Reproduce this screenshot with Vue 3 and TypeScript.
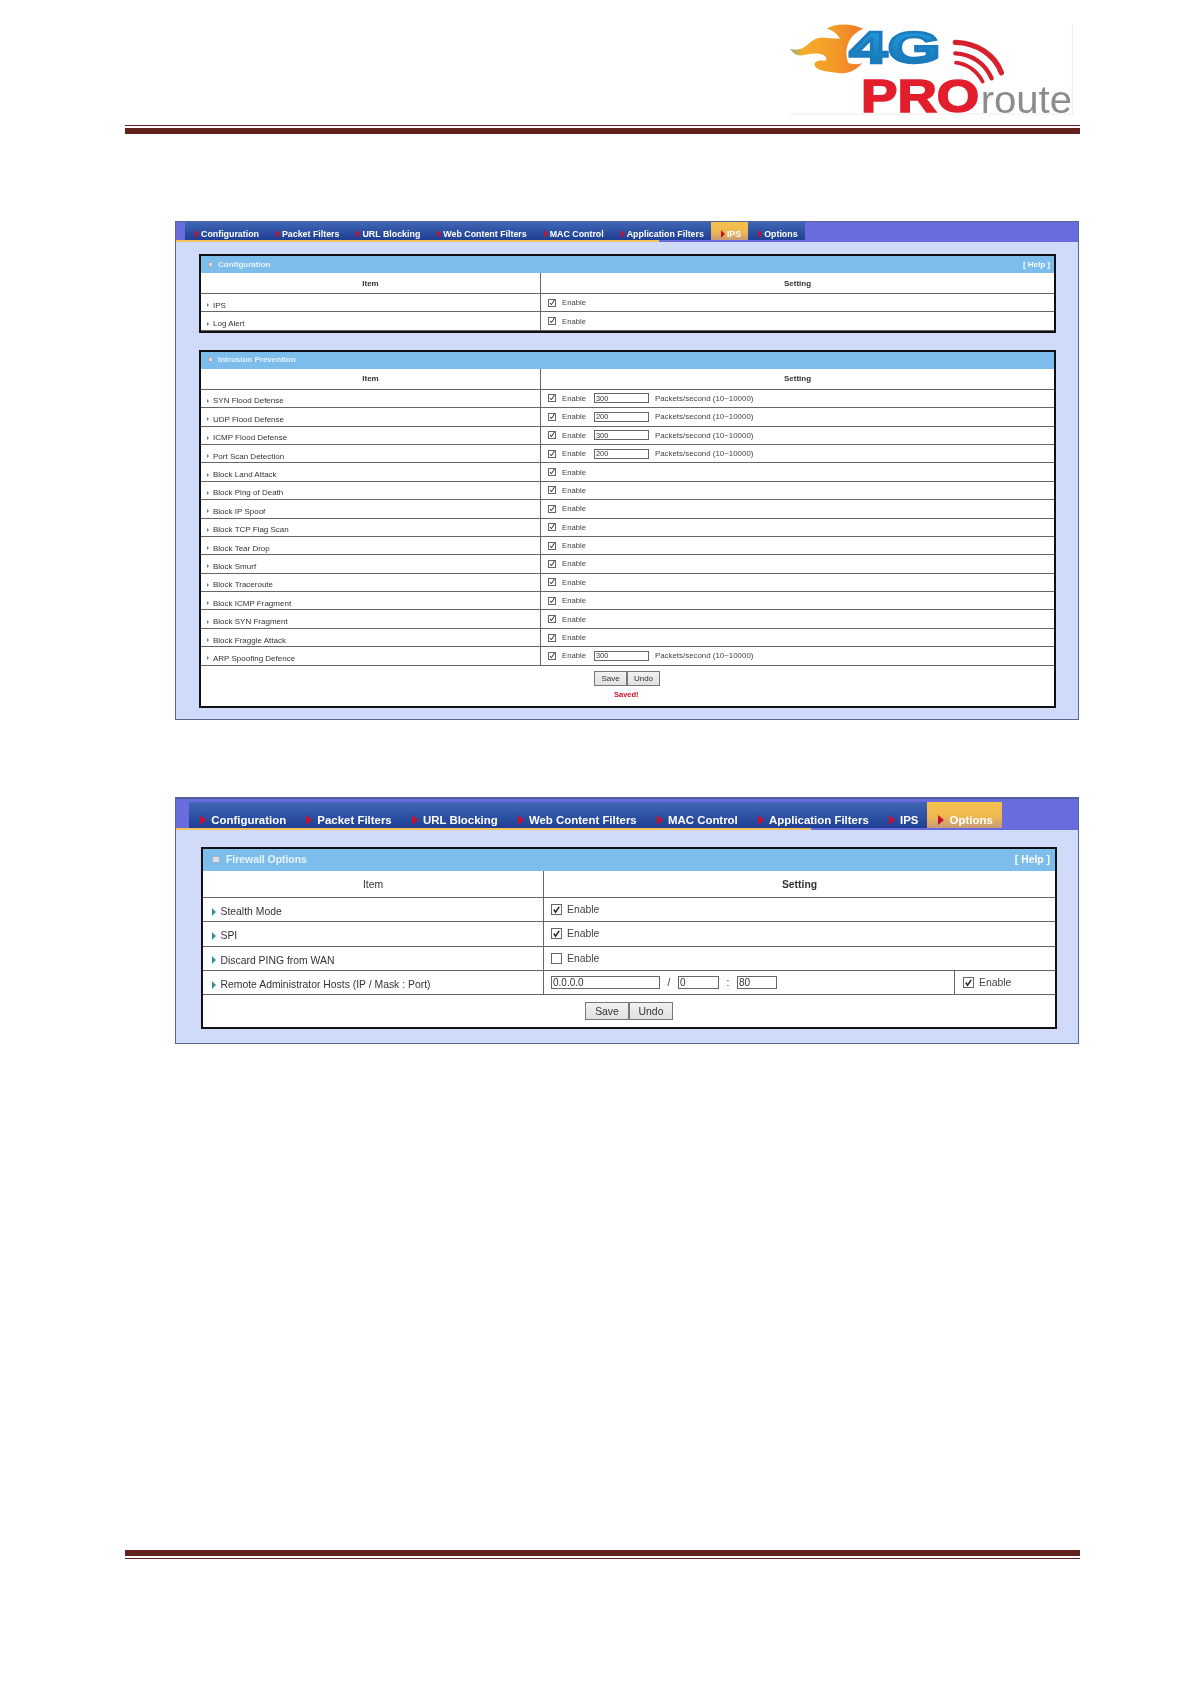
<template>
  <div class="page">
    <div class="head">
      <svg class="logo" viewBox="60 0 900 375" width="300" height="125">
        <defs>
          <linearGradient id="fl" x1="0" y1="0" x2="1" y2="0">
            <stop offset="0" stop-color="#7fb08a" />
            <stop offset="0.16" stop-color="#f3ad2c" />
            <stop offset="0.6" stop-color="#f39a28" />
            <stop offset="1" stop-color="#ee7a26" />
          </linearGradient>
          <linearGradient id="bl" x1="0" y1="0" x2="0" y2="1">
            <stop offset="0" stop-color="#22a0e2" />
            <stop offset="1" stop-color="#1670ac" />
          </linearGradient>
        </defs>
        <path transform="translate(75 54)" d="M15 92C35 100 55 92 70 78C85 62 105 55 125 60L165 62C155 45 140 35 125 32C150 15 200 15 235 32C210 42 195 60 190 75C180 100 185 120 190 135C205 140 220 140 232 135C215 155 190 170 160 165C130 160 95 160 88 140C88 130 100 125 120 128C128 128 125 110 105 108C80 102 55 115 40 112C30 110 20 100 15 92Z" fill="url(#fl)" />
        <text x="268" y="190" class="l4g" textLength="274" lengthAdjust="spacingAndGlyphs">4G</text>
        <text x="303" y="337" class="lpro" textLength="355" lengthAdjust="spacingAndGlyphs">PRO</text>
        <text x="662" y="338" class="lroute" textLength="274" lengthAdjust="spacingAndGlyphs">route</text>
        <g fill="none" stroke="#d6202c" stroke-linecap="round">
          <path d="M586 127C650 128 705 165 724 218" stroke-width="16" />
          <path d="M586 160C635 162 675 190 695 235" stroke-width="13" />
          <path d="M588 188C620 192 650 212 668 245" stroke-width="11" />
        </g>
        <path d="M937 72V342H90" fill="none" stroke="#e2e2e2" stroke-width="2" />
      </svg>
    </div>
    <div class="thin"></div>
    <div class="thick"></div>

    <section class="panel sm first">
      <div class="bar">
        <div class="tabs">
          <div v-for="t in tabs" :key="t" class="tab" :class="{ on: t === 'IPS' }"><i class="arrow"></i>{{ t }}</div>
        </div>
      </div>
      <div class="accent" style="width: 483px"></div>
      <div class="box">
        <div class="title"><span><i class="dot"></i>Configuration</span><b>[ Help ]</b></div>
        <div class="row hd"><div class="c1">Item</div><div class="c2">Setting</div></div>
        <div v-for="r in cfgRows" :key="r" class="row">
          <div class="c1 it"><i class="tri"></i>{{ r }}</div>
          <div class="c2 st"><span class="cb"><svg viewBox="0 0 10 10"><path d="M2 5l2 3 5-8" /></svg></span><span class="en">Enable</span></div>
        </div>
      </div>
      <div class="box second">
        <div class="title"><span><i class="dot"></i>Intrusion Prevention</span></div>
        <div class="row hd"><div class="c1">Item</div><div class="c2">Setting</div></div>
        <div v-for="r in ipsRows" :key="r.name" class="row">
          <div class="c1 it"><i class="tri"></i>{{ r.name }}</div>
          <div class="c2 st">
            <span class="cb"><svg viewBox="0 0 10 10"><path d="M2 5l2 3 5-8" /></svg></span><span class="en">Enable</span>
            <template v-if="r.val"><input class="num" :value="r.val" readonly /><span class="unit">Packets/second (10~10000)</span></template>
          </div>
        </div>
        <div class="acts">
          <div class="btns"><button>Save</button><button>Undo</button></div>
          <div class="saved">Saved!</div>
        </div>
      </div>
    </section>

    <section class="panel lg">
      <div class="bar">
        <div class="tabs">
          <div v-for="t in tabs" :key="t" class="tab" :class="{ on: t === 'Options' }"><i class="arrow"></i>{{ t }}</div>
        </div>
      </div>
      <div class="accent" style="width: 635px"></div>
      <div class="box">
        <div class="title"><span><i class="dot"></i>Firewall Options</span><b>[ Help ]</b></div>
        <div class="row hd"><div class="c1">Item</div><div class="c2">Setting</div></div>
        <div v-for="r in optRows" :key="r.name" class="row">
          <div class="c1 it"><i class="tri"></i>{{ r.name }}</div>
          <div class="c2 st">
            <span class="cb"><svg v-if="r.on" viewBox="0 0 10 10"><path d="M2 5l2 3 4-6" /></svg></span><span class="en">Enable</span>
          </div>
        </div>
        <div class="row">
          <div class="c1 it"><i class="tri"></i>Remote Administrator Hosts (IP / Mask : Port)</div>
          <div class="c2 st hosts">
            <div class="addr">
              <input class="ip" value="0.0.0.0" readonly /><span class="sep">/</span>
              <input class="mask" value="0" readonly /><span class="sep">:</span>
              <input class="port" value="80" readonly />
            </div>
            <div class="c3"><span class="cb"><svg viewBox="0 0 10 10"><path d="M2 5l2 3 4-6" /></svg></span><span class="en">Enable</span></div>
          </div>
        </div>
        <div class="acts">
          <div class="btns"><button>Save</button><button>Undo</button></div>
        </div>
      </div>
    </section>

    <div class="foot">
      <div class="thick"></div>
      <div class="thin"></div>
    </div>
  </div>
</template>

<script setup lang="ts">
const tabs = [
  'Configuration',
  'Packet Filters',
  'URL Blocking',
  'Web Content Filters',
  'MAC Control',
  'Application Filters',
  'IPS',
  'Options',
]

const cfgRows = ['IPS', 'Log Alert']

const ipsRows: { name: string; val?: string }[] = [
  { name: 'SYN Flood Defense', val: '300' },
  { name: 'UDP Flood Defense', val: '200' },
  { name: 'ICMP Flood Defense', val: '300' },
  { name: 'Port Scan Detection', val: '200' },
  { name: 'Block Land Attack' },
  { name: 'Block Ping of Death' },
  { name: 'Block IP Spoof' },
  { name: 'Block TCP Flag Scan' },
  { name: 'Block Tear Drop' },
  { name: 'Block Smurf' },
  { name: 'Block Traceroute' },
  { name: 'Block ICMP Fragment' },
  { name: 'Block SYN Fragment' },
  { name: 'Block Fraggle Attack' },
  { name: 'ARP Spoofing Defence', val: '300' },
]

const optRows = [
  { name: 'Stealth Mode', on: true },
  { name: 'SPI', on: true },
  { name: 'Discard PING from WAN', on: false },
]
</script>

<style>
body {
  background: #fff;
}
</style>

<style scoped>
.page {
  width: 955px;
  height: 1684px;
  margin-left: 125px;
  display: flex;
  flex-direction: column;
  font-family: "Liberation Sans", Arial, sans-serif;
  color: #333;
}
.head {
  height: 125px;
  display: flex;
  justify-content: flex-end;
}
.logo {
  display: block;
  filter: blur(0.5px);
}
.l4g {
  font: 700 133px "Liberation Sans", sans-serif;
  fill: url(#bl);
  stroke: #1a7cbc;
  stroke-width: 7px;
}
.lpro {
  font: 700 140px "Liberation Sans", sans-serif;
  fill: #e31e2c;
  stroke: #e31e2c;
  stroke-width: 5px;
}
.lroute {
  font: 400 118px "Liberation Sans", sans-serif;
  fill: #8c8c8c;
}
.thin {
  height: 1px;
  background: #5e1f1c;
}
.thick {
  height: 6px;
  margin-top: 2px;
  background: #62221e;
}
.foot {
  margin-top: auto;
  margin-bottom: 125px;
}
.foot .thick {
  margin: 0 0 2px;
}

.panel {
  width: 904px;
  margin-left: 50px;
  border: 1px solid #56688f;
  background: #d0dbfa;
  box-sizing: border-box;
  filter: blur(0.3px);
}
.first {
  margin-top: 87px;
  height: 499px;
}
.lg {
  margin-top: 77px;
  height: 247px;
}
.bar {
  background: #686cdc;
  display: flex;
  align-items: flex-start;
  box-sizing: border-box;
}
.sm .bar {
  height: 20px;
  padding-left: 9px;
}
.lg .bar {
  height: 32px;
  padding: 3px 0 0 13px;
  border-top: 1px solid #48609c;
}
.tabs {
  display: flex;
}
.tab {
  display: flex;
  align-items: center;
  color: #fff;
  font-weight: 700;
  white-space: nowrap;
  background: linear-gradient(#3f66b4, #1f3f94);
}
.tab.on {
  background: linear-gradient(#f4c24e, #f0b850 55%, #c89a78);
}
.sm .tab {
  height: 18px;
  font-size: 8.85px;
  padding: 6px 7px 0 10px;
  box-sizing: border-box;
}
.lg .tab {
  height: 26px;
  font-size: 11.45px;
  padding: 9px 9px 0 11px;
  box-sizing: border-box;
}
.arrow {
  display: inline-block;
  width: 0;
  height: 0;
  border-style: solid;
  border-color: transparent transparent transparent #c8102e;
}
.sm .arrow {
  border-width: 4px 0 4px 4px;
  margin-right: 2px;
}
.lg .arrow {
  border-width: 5px 0 5px 6px;
  margin-right: 5.2px;
}
.accent {
  position: relative;
  height: 2px;
  margin-top: -2px;
  background: #f2c45a;
}

.box {
  background: #fff;
  border: 2px solid #111;
  box-sizing: border-box;
}
.sm .box {
  width: 857px;
  margin: 12px 0 0 23px;
}
.sm .second {
  margin-top: 17px;
  height: 358px;
}
.lg .box {
  width: 856px;
  margin: 17px 0 0 25px;
  height: 182px;
}
.title {
  display: flex;
  justify-content: space-between;
  align-items: center;
  background: #7dbdec;
  color: #e8f3fc;
  font-weight: 700;
  box-sizing: border-box;
}
.title b {
  color: #fff;
}
.sm .title {
  height: 17px;
  font-size: 8px;
  padding: 0 4px 1px 7px;
}
.lg .title {
  height: 22px;
  font-size: 10.4px;
  padding: 0 5px 1px 9px;
}
.dot {
  display: inline-block;
  background: #d8dde6;
  border: 1px solid #9fb0c4;
  box-sizing: border-box;
}
.sm .dot {
  width: 5px;
  height: 5px;
  margin-right: 5px;
}
.lg .dot {
  width: 8px;
  height: 7px;
  margin-right: 6px;
}
.row {
  display: flex;
  border-bottom: 1px solid #666;
  box-sizing: border-box;
}
.sm .row {
  height: 18.4px;
  font-size: 8px;
}
.lg .row {
  height: 24.3px;
  font-size: 10.4px;
}
.sm .row.hd {
  height: 21px;
}
.lg .row.hd {
  height: 27px;
}
.c1 {
  display: flex;
  align-items: center;
  border-right: 1px solid #666;
  box-sizing: border-box;
}
.sm .c1 {
  width: 340px;
}
.lg .c1 {
  width: 341px;
}
.hd .c1,
.hd .c2 {
  justify-content: center;
  font-weight: 700;
}
.lg .hd .c1 {
  font-weight: 400;
}
.c2 {
  flex: 1;
  display: flex;
  align-items: center;
}
.sm .it {
  padding: 5px 0 0 6px;
}
.lg .it {
  padding: 4px 0 0 9px;
}
.tri {
  display: inline-block;
  width: 0;
  height: 0;
  border-style: solid;
  border-color: transparent transparent transparent #3a9098;
}
.sm .tri {
  border-width: 2.5px 0 2.5px 2.5px;
  margin-right: 4px;
}
.lg .tri {
  border-width: 4px 0 4px 4px;
  margin-right: 4.5px;
}
.sm .st,
.lg .st {
  padding-left: 7px;
}
.cb {
  display: inline-block;
  background: #fff;
  border: 1px solid #666;
  box-sizing: border-box;
  flex: none;
}
.cb svg {
  display: block;
  width: 100%;
  height: 100%;
  overflow: visible;
}
.cb path {
  fill: none;
  stroke: #222;
  stroke-width: 1.6;
}
.sm .cb {
  width: 8px;
  height: 8px;
  margin-right: 6px;
}
.lg .cb {
  width: 11px;
  height: 11px;
  margin-right: 5px;
}
.en {
  color: #444;
}
.sm .en {
  font-size: 7.7px;
}
.unit {
  color: #444;
  font-size: 7.9px;
  margin-left: 6px;
}
input {
  font-family: inherit;
  color: #333;
  background: #fff;
  border: 1px solid #666;
  box-sizing: border-box;
  padding: 0 1px;
  outline: none;
}
.num {
  width: 55px;
  height: 10px;
  font-size: 7.4px;
  margin-left: 8px;
}
.sm .acts {
  padding-top: 5px;
  margin-left: 393px;
  width: 200px;
}
.btns {
  display: flex;
}
.lg .btns {
  margin: 7px 0 0 382px;
}
button {
  font-family: inherit;
  color: #333;
  border: 1px solid #777;
  background: linear-gradient(#f2f2f2, #e0e0e0);
  padding: 0;
}
.sm button {
  height: 15px;
  width: 33px;
  font-size: 8px;
}
.lg button {
  height: 18px;
  width: 44px;
  font-size: 10.4px;
}
.saved {
  color: #d0102a;
  font-size: 7.5px;
  font-weight: 700;
  margin: 4px 0 0 20px;
}
.hosts {
  padding: 0 !important;
}
.addr {
  flex: 1;
  display: flex;
  align-items: center;
  padding-left: 7px;
  border-right: 1px solid #666;
  height: 100%;
}
.ip {
  width: 109px;
  height: 13px;
  font-size: 10px;
}
.mask {
  width: 41px;
  height: 13px;
  font-size: 10px;
}
.port {
  width: 40px;
  height: 13px;
  font-size: 10px;
}
.sep {
  width: 18px;
  text-align: center;
}
.c3 {
  width: 100px;
  display: flex;
  align-items: center;
  padding-left: 8px;
  box-sizing: border-box;
}
</style>
